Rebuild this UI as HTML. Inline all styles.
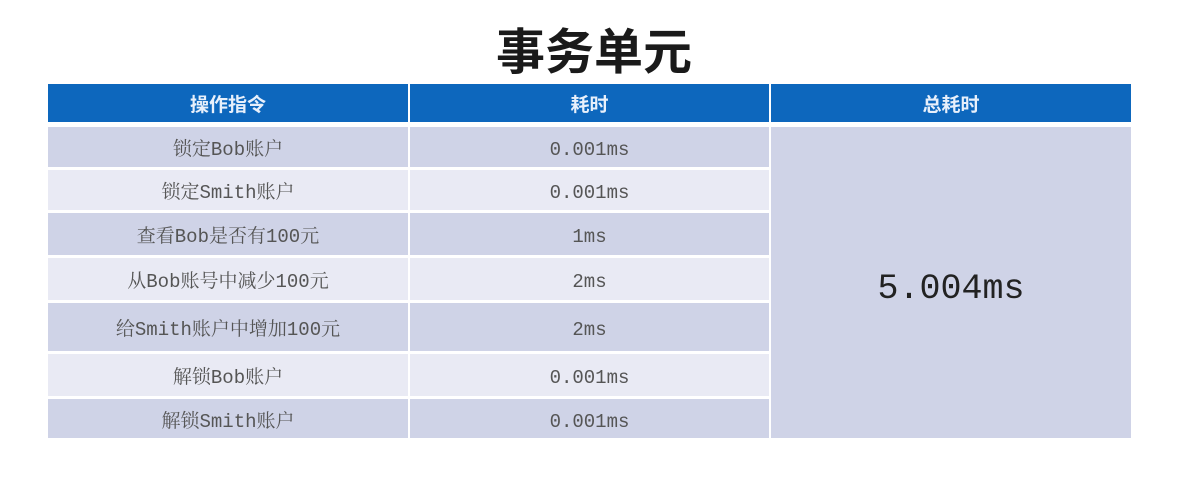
<!DOCTYPE html><html><head><meta charset="utf-8"><style>
body{margin:0;width:1188px;height:486px;background:#fff;position:relative;overflow:hidden;font-family:"Liberation Mono","Noto Serif CJK SC",monospace;}
.t{position:absolute;left:0;width:1188px;top:23px;text-align:center;font:bold 49px/60px "Liberation Sans","Noto Sans CJK SC",sans-serif;color:#1a1a1a;}
.c{position:absolute;display:flex;align-items:center;justify-content:center;color:#555;font-size:19px;line-height:20px;box-sizing:border-box;padding-top:6px;}
.h{background:#0d67bd;color:#e8f0fb;font-weight:bold;font-family:"Liberation Sans","Noto Sans CJK SC",sans-serif;font-size:19px;padding-top:5px;}
.d{background:#cfd3e7}.l{background:#e9eaf4}
</style></head><body>
<div class="t">事务单元</div>
<div class="c h" style="left:48px;top:84px;width:360px;height:38px">操作指令</div>
<div class="c h" style="left:410px;top:84px;width:359px;height:38px">耗时</div>
<div class="c h" style="left:771px;top:84px;width:360px;height:38px">总耗时</div>
<div class="c d" style="left:771px;top:127px;width:360px;height:311px;font-size:35px;line-height:40px;color:#222;padding-top:12px;">5.004ms</div>

<div class="c d" style="left:48px;top:127px;width:360px;height:40px">锁定Bob账户</div>
<div class="c d" style="left:410px;top:127px;width:359px;height:40px">0.001ms</div>
<div class="c l" style="left:48px;top:170px;width:360px;height:40px">锁定Smith账户</div>
<div class="c l" style="left:410px;top:170px;width:359px;height:40px">0.001ms</div>
<div class="c d" style="left:48px;top:213px;width:360px;height:42px">查看Bob是否有100元</div>
<div class="c d" style="left:410px;top:213px;width:359px;height:42px">1ms</div>
<div class="c l" style="left:48px;top:258px;width:360px;height:42px">从Bob账号中减少100元</div>
<div class="c l" style="left:410px;top:258px;width:359px;height:42px">2ms</div>
<div class="c d" style="left:48px;top:303px;width:360px;height:48px">给Smith账户中增加100元</div>
<div class="c d" style="left:410px;top:303px;width:359px;height:48px">2ms</div>
<div class="c l" style="left:48px;top:354px;width:360px;height:42px">解锁Bob账户</div>
<div class="c l" style="left:410px;top:354px;width:359px;height:42px">0.001ms</div>
<div class="c d" style="left:48px;top:399px;width:360px;height:39px">解锁Smith账户</div>
<div class="c d" style="left:410px;top:399px;width:359px;height:39px">0.001ms</div>
</body></html>
